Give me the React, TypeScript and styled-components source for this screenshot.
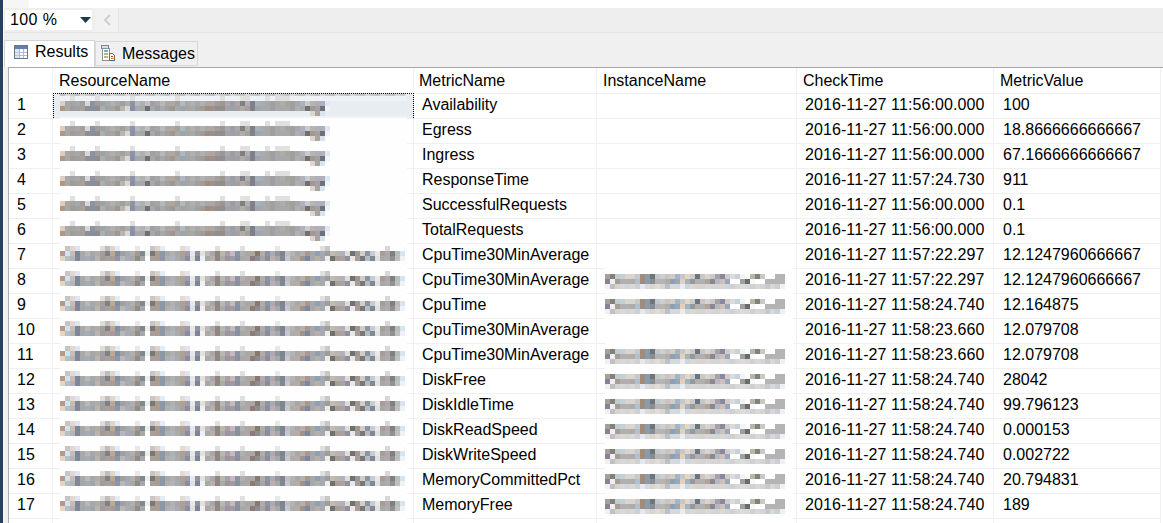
import React from "react";
import styled, { createGlobalStyle } from "styled-components";

const Global = createGlobalStyle`
  html, body { margin: 0; padding: 0; height: 523px; overflow: hidden; background: #fff; }
  body { font-family: "Liberation Sans", Arial, sans-serif; font-size: 16px; color: #000; }
`;

const Page = styled.div`display: flex; width: 1163px; height: 523px; overflow: hidden;`;
const Strip = styled.div`width: 3px; flex: none; background: #2a3d62;`;
const Main = styled.div`flex: 1; min-width: 0; display: flex; flex-direction: column; border-left: 1px solid #f8f8f8; background: #f0f0f0;`;
const TopBlank = styled.div`height: 8px; flex: none; background: linear-gradient(to right, #f6f6f6 25px, #fff 25px);`;
const Toolbar = styled.div`height: 24px; flex: none; display: flex; align-items: center; background: #eeeeee; border-bottom: 1px solid #e6e6e6;`;
const Combo = styled.div`width: 87px; height: 20px; margin-left: 1px; padding: 0 1px 0 5px; box-sizing: border-box; background: #fff; display: flex; align-items: center; justify-content: space-between; line-height: 20px; letter-spacing: 0.4px;`;
const ScrollLeft = styled.div`width: 23px; height: 24px; margin-left: 3px; background: #f2f2f2; display: flex; align-items: center; justify-content: center; border-right: 1px solid #e6e6e6;`;
const Tabs = styled.div`height: 34px; flex: none; display: flex; align-items: flex-start; padding-top: 7px; box-sizing: border-box;`;
const Tab = styled.div<{ $active?: boolean }>`
  height: ${(p) => (p.$active ? 27 : 25)}px;
  margin-top: ${(p) => (p.$active ? 0 : 1)}px;
  padding-left: ${(p) => (p.$active ? 9 : 5)}px;
  width: ${(p) => (p.$active ? 91 : 103)}px;
  box-sizing: border-box;
  display: flex;
  align-items: center;
  gap: ${(p) => (p.$active ? 7 : 6)}px;
  background: ${(p) => (p.$active ? "#fff" : "#f0f0f0")};
  border: 1px solid ${(p) => (p.$active ? "#d4d4d4" : "#d8d8d8")};
  border-bottom: ${(p) => (p.$active ? "none" : "1px solid #d8d8d8")};
  padding-bottom: ${(p) => (p.$active ? 4 : 0)}px;
`;
const GridBox = styled.div`flex: 1; margin-left: 4px; min-height: 0; overflow: hidden; background: #fff; border-top: 1px solid #a8a8a8; border-left: 1px solid #b0b0b0;`;
const Row = styled.div`display: grid; grid-template-columns: 44px 361px 183px 200px 197px 167px; width: 1152px;`;
const Cell = styled.div<{ $head?: boolean; $pad?: number; $date?: boolean }>`
  height: ${(p) => (p.$head ? 26 : 25)}px;
  box-sizing: border-box;
  border-right: 1px solid #f0f0f0;
  border-bottom: 1px solid #f0f0f0;
  padding-left: ${(p) => p.$pad ?? (p.$head ? 6 : 8)}px;
  padding-bottom: ${(p) => (p.$head ? 0 : 2)}px;
  letter-spacing: ${(p) => (p.$date ? "0.09px" : "normal")};
  display: flex;
  align-items: center;
  white-space: nowrap;
`;
const BlurCell = styled.div<{ $focus?: boolean; $inset: number }>`
  position: relative;
  height: 25px;
  box-sizing: border-box;
  border-right: 1px solid #f0f0f0;
  border-bottom: 1px solid #f0f0f0;
  padding-left: ${(p) => p.$inset}px;
  background: ${(p) => (p.$focus ? "#e8edf1" : "transparent")};
  ${(p) => p.$focus && `
    &::after {
      content: "";
      position: absolute;
      inset: -1px -1px 0 0;
      border: 1px dotted #000;
      border-bottom: none;
    }
  `}
`;
const BlurSvg = styled.svg`display: block; margin-top: -1px; position: relative;`;

const S0 = ". . e0e0e0 . . . . e0e0e0 . . . . . . e0e0e0 . . . . . . . . e0e0e0 . . . . . . . . e0e0e0 . . . e0e4dc e0e0e0 . . . e0e0e0 . e0e0e0 e0e0e0 e0e0e0 . . . . . . . .";
const S1 = "e0ccc0 a8a8a8 a4a4a4 a8a8a8 a0a0a0 d8d8d8 8c94a4 a09ca0 9ca4a4 a8a8a8 b0b0b0 a8a8a8 a0a09c b0aca8 8c94a8 b8b8c0 b0b0b0 c0c0c0 a0a0a0 a8a4a8 b8b8b8 a8a8a8 b0a8a0 a0a0a0 b0b8c0 a8a8a8 b0b0b0 a8a8a8 b0b0b0 a8a8a8 b0a8a0 a09ca0 9c9890 a8a8b0 a09ca0 a8a8a8 808084 b0b0b0 80808a a8b0b8 a8acb4 a8a8a8 a0a0a0 a8a8a8 b0aca8 a8a4a0 a0a0a0 a8a8a8 b0b0c0 c8ccd0 b8b4b0 b0b0bc b0b0bc dfe8f4";
const S2 = "b09880 a8a8a8 a09c98 a0a0a0 a8a09c 909090 8890a0 908c90 a8b0b0 a0a4a4 a8a4a4 a09890 b8b4b0 d8d8d8 8890a8 a8a8b0 a8a8a8 6f6f78 a8a8a8 9c9ca0 a8a8a8 a0a0a0 a09890 a8a8a8 9ca4ac a8a4a0 a8a8a8 a0a0a0 a09c98 a08c80 a09088 909090 988c88 a0a4a8 9ca0a8 a8a0a0 b0aca8 a8a09c 80808a a0a4ac a8a8ac a8a8a8 a0a0a0 a8a8ac a8a8a8 a8a8a8 a0a0a4 b0b0b0 a8a8a8 70706c a09898 a8a0a0 707078 eef4fa";
const S3 = ". . . . . . . . . . . . . . . . . . . . . . . . . . . . . . . . . . . . . . . . . . . . . . . . . . e0d4cc a8a4a0 d8e4ee .";

const R0 = ". c8c4c2 e0d8d4 dfe5f0 . . . . e0dcd8 c0bebc dcd8d0 e4ecf6 . . . e8e8e8 . . c8c4c8 dcd4cc e4ecf6 . . . e4dcd4 e4e4f0 . . . . . e0e0e0 . . . . e0e0e0 . . . . . . e8e8e8 . . . . . . . . e0e0e0 c8c8c8 . . . . . . . . . . . d8d8d8 . . .";
const R1 = "b89888 cfe4f2 c8bcb4 7e8696 a8a8a8 b8b8b8 a8a8a8 b0aca8 a0a0a0 808088 c0a890 8090a4 a0a0a4 a8a8a8 b0b0b0 a49890 808890 e8f0e8 787878 a89c90 8c98a4 a8a8a8 b0b0b0 a8a8a8 b4a090 9c9cac e8e8ec 8c94a4 e4e0dc bcb8bc a8a8a8 908880 b8b8b0 a8a0a8 c8b8bc 8c94a4 b0b0b0 a8a8a8 b0a8a0 8a7870 b0aca8 8c94a8 b0a8b0 909898 7e8490 c0c0c4 b4b4b4 a8a8a8 b8b0a8 a89890 a8a8a8 90a0b4 a4a8b4 a09c98 c0bcb4 b8b4b0 b0b0c0 e0dcd8 707070 a09890 d0cec8 8c94a0 c4ccd4 e8e8e8 a89c98 b0a8a4 808080 b8bcbc d8e4ee";
const R2 = "e4d4c0 b4c0c8 b8b4b4 808898 a0a8b0 a8acb0 a0a4ac b8b4b0 a09c9c a8a09c a89c94 8c98a8 b8b8b8 a8acb8 a8a8a8 908c88 a8a8a8 ffffff a8a098 a89c94 8c98a8 b0b0b0 b0b4bc a8acac a8a09c 8c8ca0 e0e0e0 7c8498 f0f0f0 a8a8a8 b8b0ac 908880 a8aca8 9c94a0 a09ca0 8890a0 a8a8a8 b0a8a8 8c7c78 8c8c94 a8a4a0 8c8c9c b8b0b4 a8a8a8 808898 c8c8cc b0aca8 b4acac a09488 7a88a4 a8a8a8 b4b0a8 a8a8b0 ecece8 707070 a8a098 a8a4a0 9090a0 e8e8e8 a89c98 787878 b8bcc0 808898 e0e0e0 a8a8a8 b0acac 909090 c0c0c0 eef2f6";

const I0 = "a8a098 80807c c0ccd0 c4d0d4 d8d4d0 d8d4d0 c8c8c8 a08c78 889cac 707478 c0c8c8 c8d0d0 ccc4bc d0ccc8 a8b4c0 c0c8d0 ead4bc c0ccd8 707474 c4c8c8 d8d4d0 d0c8c4 a8a0a8 8888a0 d4ccc8 d8dcdc c8d0d8 f0f4fa ffffff b8b4a8 808478 c8c8c4 ffffff ffffff b4b4b4 b4b4b4";
const I1 = "8c8098 f0f0f0 a89c94 b0b0b0 b0b0b0 b0aca8 b0c0d0 a08c7c 889cac 888c94 b4b4b8 b8b4b4 b4aca8 8ca0b8 98a8b8 e8d0b8 a0b4c4 989898 b0b0b0 b0b0b0 b0a498 888898 b8b8c0 ccc0b8 98a8bc ffffff ffffff a0a098 686c70 f8f8f8 ffffff ffffff b4b4b4 b4b4b4 b4b4b4 b4b4b4";
const I2 = "f0f0f0 c0c0c0 d4d4d4 d8d8d8 d4d4d4 d8d8d8 d0d0d0 e4e8f4 dcdad8 d8d4d0 e0dcd8 d8d4d0 b8c0c8 d8d8d8 d4d8dc e4ecf6 d4d4d4 d8d8d8 d8d4d0 d4d4d4 d8d8d8 d8d4d4 d4d4d0 d8d8d8 d4d4d8 d0d0d0 d8d8d8 dcdcdc d8d8d8 d0d0d0 d8d8d8 d4d4d4 c8c8c8 d4d8dc c8d0d4 f0f0f0";

const STORAGE = [S0, S1, S2, S3];
const SERVER = [R0, R1, R2];
const INSTANCE = [I0, I1, I2];
const TOP_STRIP = Array.from({ length: 69 }, (_, i) => (i % 3 === 1 ? "d8d8d8" : i % 3 === 2 ? "cacaca" : "c2c2c2")).join(" ");

function Blur({ rows, width, halo, first = 3, focus }: { rows: string[]; width: number; halo: string; first?: number; focus?: boolean }) {
  return (
    <BlurSvg width={width} height={26} viewBox={`0 0 ${width} 26`} shapeRendering="crispEdges" aria-hidden>
      <rect width={width} height={26} fill={halo} />
      {focus && <rect y={3} width={width} height={5} fill="#eff2f6" />}
      {focus && <rect y={23} width={width} height={3} fill="#f0f2f4" />}
      {focus && TOP_STRIP.split(" ").map((c, i) => <rect key={i} x={i * 5} y={0} width={5} height={3} fill={`#${c}`} />)}
      {rows.map((line, r) =>
        line.split(" ").map((c, i) =>
          c === "." ? null : <rect key={`${r}-${i}`} x={i * 5} y={first + r * 5} width={5} height={5} fill={`#${c}`} />
        )
      )}
    </BlurSvg>
  );
}

const TableIcon = () => (
  <svg width="14" height="14" viewBox="0 0 14 14" shapeRendering="crispEdges" aria-hidden>
    <rect x="0.5" y="0.5" width="13" height="13" fill="#fff" stroke="#6a7488" />
    <rect x="1" y="1" width="12" height="3" fill="#5f7fb8" />
    <path d="M1 7h12M1 10h12M5 4v9M9 4v9" stroke="#a8bcd8" fill="none" />
    <rect x="1" y="4" width="4" height="9" fill="#c9d6ea" opacity="0.6" />
  </svg>
);

const MessageIcon = () => (
  <svg width="15" height="17" viewBox="0 0 15 17" shapeRendering="crispEdges" aria-hidden>
    <rect x="0.5" y="0.5" width="7" height="3" fill="#d8dce4" stroke="#7c8494" />
    <rect x="1.5" y="3.5" width="7" height="12" fill="#fff" stroke="#8890a0" />
    <rect x="3" y="5" width="4" height="2" fill="#7fa8d0" />
    <rect x="3" y="8" width="4" height="2" fill="#9cc08c" />
    <rect x="3" y="11" width="4" height="2" fill="#d0b070" />
    <path d="M8.500 8.500h3l2 2v5h-5z" fill="#fff" stroke="#7c6a58" />
    <rect x="10" y="11" width="2" height="1" fill="#c04030" />
    <rect x="10" y="13" width="3" height="1" fill="#d89030" />
    <rect x="10" y="15" width="3" height="1" fill="#3060a8" />
  </svg>
);

type Data = [string, boolean, string, string];
const DATA: Data[] = [
  ["Availability", false, "2016-11-27 11:56:00.000", "100"],
  ["Egress", false, "2016-11-27 11:56:00.000", "18.8666666666667"],
  ["Ingress", false, "2016-11-27 11:56:00.000", "67.1666666666667"],
  ["ResponseTime", false, "2016-11-27 11:57:24.730", "911"],
  ["SuccessfulRequests", false, "2016-11-27 11:56:00.000", "0.1"],
  ["TotalRequests", false, "2016-11-27 11:56:00.000", "0.1"],
  ["CpuTime30MinAverage", false, "2016-11-27 11:57:22.297", "12.1247960666667"],
  ["CpuTime30MinAverage", true, "2016-11-27 11:57:22.297", "12.1247960666667"],
  ["CpuTime", true, "2016-11-27 11:58:24.740", "12.164875"],
  ["CpuTime30MinAverage", false, "2016-11-27 11:58:23.660", "12.079708"],
  ["CpuTime30MinAverage", true, "2016-11-27 11:58:23.660", "12.079708"],
  ["DiskFree", true, "2016-11-27 11:58:24.740", "28042"],
  ["DiskIdleTime", true, "2016-11-27 11:58:24.740", "99.796123"],
  ["DiskReadSpeed", true, "2016-11-27 11:58:24.740", "0.000153"],
  ["DiskWriteSpeed", true, "2016-11-27 11:58:24.740", "0.002722"],
  ["MemoryCommittedPct", true, "2016-11-27 11:58:24.740", "20.794831"],
  ["MemoryFree", true, "2016-11-27 11:58:24.740", "189"],
];

export default function App() {
  return (
    <Page>
      <Global />
      <Strip />
      <Main>
        <TopBlank />
        <Toolbar>
          <Combo>
            100 %
            <svg width="12" height="8" viewBox="0 0 12 8" aria-hidden>
              <path d="M1 1h11l-5.500 6z" fill="#1e3a4e" />
            </svg>
          </Combo>
          <ScrollLeft>
            <svg width="8" height="12" viewBox="0 0 8 12" aria-hidden>
              <path d="M7 1L2 6l5 5" fill="none" stroke="#cfcfcf" strokeWidth="2" />
            </svg>
          </ScrollLeft>
        </Toolbar>
        <Tabs>
          <Tab $active>
            <TableIcon />
            Results
          </Tab>
          <Tab>
            <MessageIcon />
            Messages
          </Tab>
        </Tabs>
        <GridBox>
          <Row>
            <Cell $head />
            <Cell $head>ResourceName</Cell>
            <Cell $head $pad={5}>MetricName</Cell>
            <Cell $head>InstanceName</Cell>
            <Cell $head>CheckTime</Cell>
            <Cell $head>MetricValue</Cell>
          </Row>
          {DATA.map(([metric, inst, time, value], i) => (
            <Row key={i}>
              <Cell>{i + 1}</Cell>
              <BlurCell $inset={7} $focus={i === 0}>
                <Blur
                  rows={i < 6 ? STORAGE : SERVER}
                  width={347}
                  halo={i === 0 ? "#e8edf1" : "#fefefe"}
                  focus={i === 0}
                />
              </BlurCell>
              <Cell>{metric}</Cell>
              {inst ? (
                <BlurCell $inset={8}>
                  <Blur rows={INSTANCE} width={188} halo="#fefefe" first={6} />
                </BlurCell>
              ) : (
                <Cell />
              )}
              <Cell $date>{time}</Cell>
              <Cell $pad={9}>{value}</Cell>
            </Row>
          ))}
          <Row>
            <Cell />
            <Cell />
            <Cell />
            <Cell />
            <Cell />
            <Cell />
          </Row>
        </GridBox>
      </Main>
    </Page>
  );
}
